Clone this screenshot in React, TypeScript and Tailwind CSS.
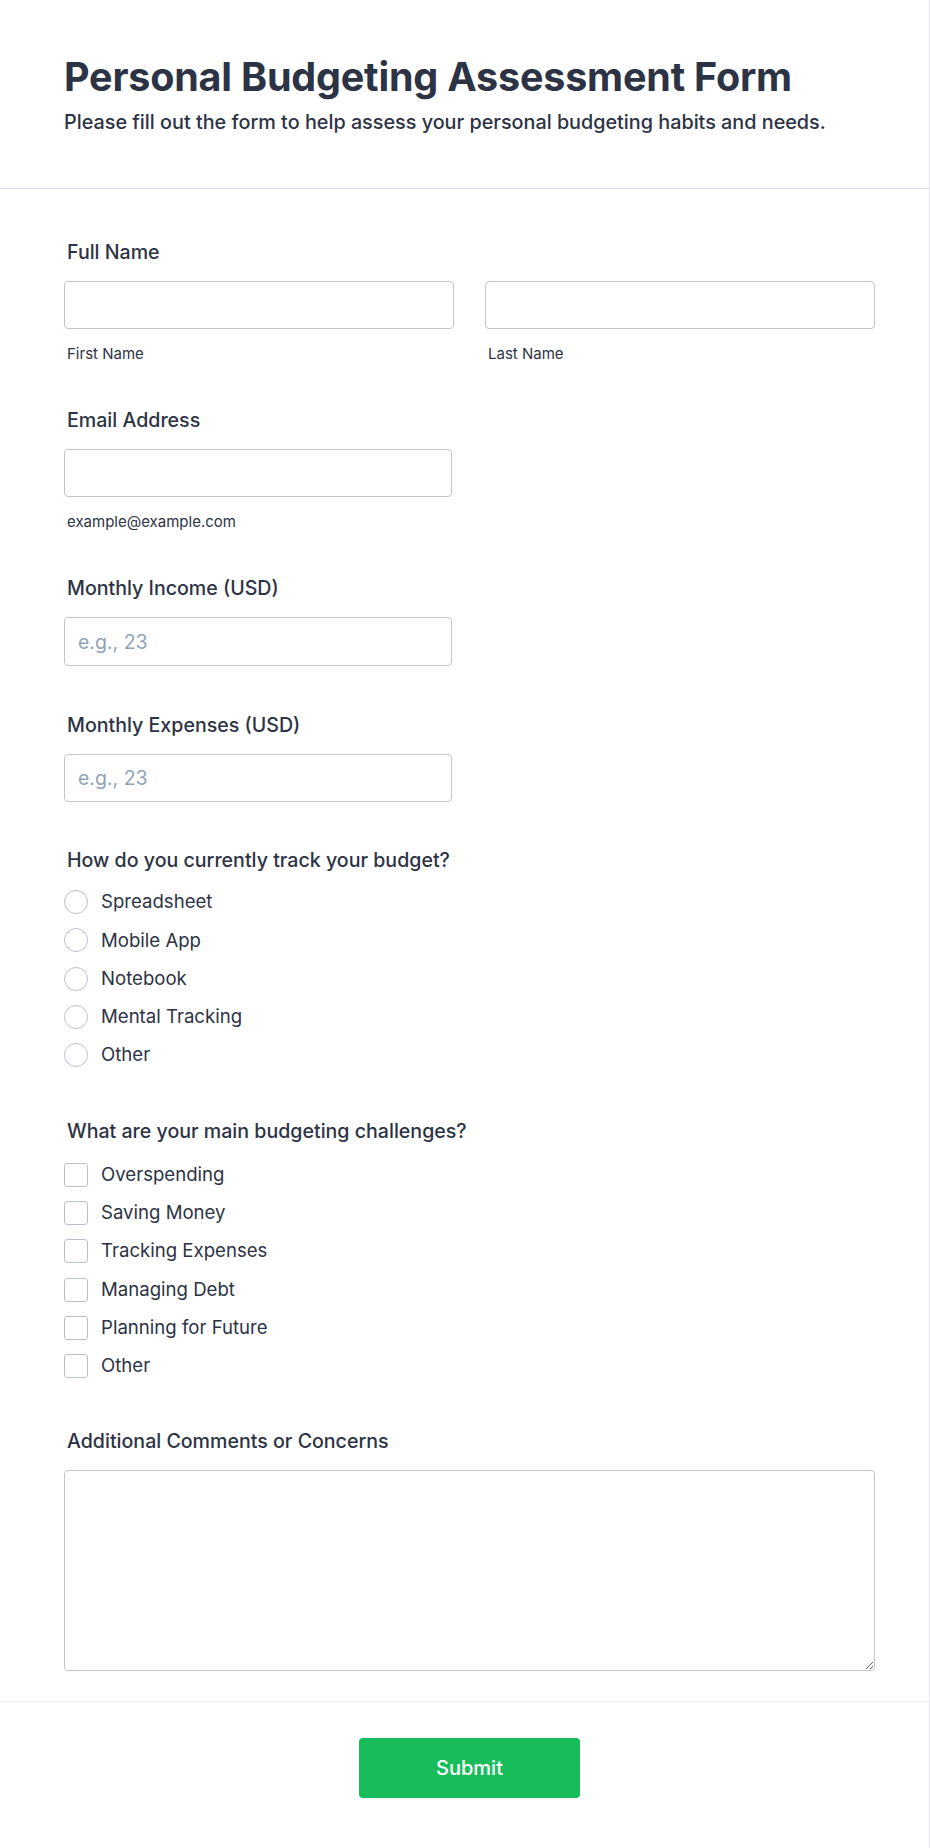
import React from "react"

const radioOptions = ["Spreadsheet", "Mobile App", "Notebook", "Mental Tracking", "Other"]
const checkOptions = [
  "Overspending",
  "Saving Money",
  "Tracking Expenses",
  "Managing Debt",
  "Planning for Future",
  "Other",
]

function Label({ children, className = "" }: { children: React.ReactNode; className?: string }) {
  return <div className={`h-6 text-[19.6px] leading-6 font-medium pl-[3px] ${className}`}>{children}</div>
}

function TextInput({ placeholder, className = "" }: { placeholder?: string; className?: string }) {
  return (
    <input
      type="text"
      placeholder={placeholder}
      className={`h-[48px] rounded-[4px] border border-[#bfc4cf] bg-white px-[13px] text-[19.5px] text-[#2c3345] placeholder:text-[#8fa3ba] outline-none ${className}`}
    />
  )
}

function SubLabel({ children }: { children: React.ReactNode }) {
  return <div className="mt-[15px] h-5 text-[15px] leading-5 pl-[3px]">{children}</div>
}

export default function App() {
  return (
    <div
      className="min-h-[1848px] w-[930px] bg-white text-[#2c3345] border-r border-[#e6e6ee]"
      style={{ fontFamily: "Inter, 'Noto Sans', sans-serif" }}
    >
      <header className="pl-[64px] pr-[54px] pt-[53px] pb-[54px] border-b border-[#dcdce6]">
        <h1 className="text-[39.5px] leading-[48px] font-bold tracking-[-0.2px]">Personal Budgeting Assessment Form</h1>
        <p className="mt-[9px] text-[19.8px] leading-6 font-medium">
          Please fill out the form to help assess your personal budgeting habits and needs.
        </p>
      </header>

      <div className="pl-[64px] pr-[54px] pt-[51px] pb-[30px]">
        {/* Full name */}
        <Label>Full Name</Label>
        <div className="mt-[17px] grid grid-cols-2 gap-[31px]">
          <div className="flex flex-col">
            <TextInput />
            <SubLabel>First Name</SubLabel>
          </div>
          <div className="flex flex-col">
            <TextInput />
            <SubLabel>Last Name</SubLabel>
          </div>
        </div>

        {/* Email */}
        <Label className="mt-[44px]">Email Address</Label>
        <div className="mt-[17px] flex flex-col w-[388px]">
          <TextInput />
          <SubLabel>example@example.com</SubLabel>
        </div>

        {/* Income */}
        <Label className="mt-[44px]">Monthly Income (USD)</Label>
        <div className="mt-[17px] flex flex-col w-[388px]">
          <TextInput placeholder="e.g., 23" className="h-[49px]" />
        </div>

        {/* Expenses */}
        <Label className="mt-[47px]">Monthly Expenses (USD)</Label>
        <div className="mt-[17px] flex flex-col w-[388px]">
          <TextInput placeholder="e.g., 23" />
        </div>

        {/* Tracking method */}
        <Label className="mt-[46px]">How do you currently track your budget?</Label>
        <div className="mt-[11px] flex flex-col">
          {radioOptions.map((opt) => (
            <label key={opt} className="flex h-[38.3px] items-center gap-[13px] text-[18.6px]">
              <span className="h-6 w-6 shrink-0 rounded-full border border-[#b9bfcb] bg-white" />
              <span>{opt}</span>
            </label>
          ))}
        </div>

        {/* Challenges */}
        <Label className="mt-[45px]">What are your main budgeting challenges?</Label>
        <div className="mt-[12px] flex flex-col">
          {checkOptions.map((opt) => (
            <label key={opt} className="flex h-[38.3px] items-center gap-[13px] text-[18.6px]">
              <span className="h-6 w-6 shrink-0 rounded-[3px] border border-[#b9bfcb] bg-white" />
              <span>{opt}</span>
            </label>
          ))}
        </div>

        {/* Comments */}
        <Label className="mt-[44px]">Additional Comments or Concerns</Label>
        <textarea className="mt-[17px] block h-[201px] w-full rounded-[4px] border border-[#bfc4cf] bg-white px-[13px] py-2 text-[19px] outline-none" />
      </div>

      <div className="border-t border-[#ececf2] pl-[64px] pr-[54px] pt-[36px] pb-[50px] flex justify-center">
        <button className="h-[60px] w-[221px] rounded-[4px] bg-[#18bd5b] text-[20px] font-medium text-white">
          Submit
        </button>
      </div>
    </div>
  )
}
